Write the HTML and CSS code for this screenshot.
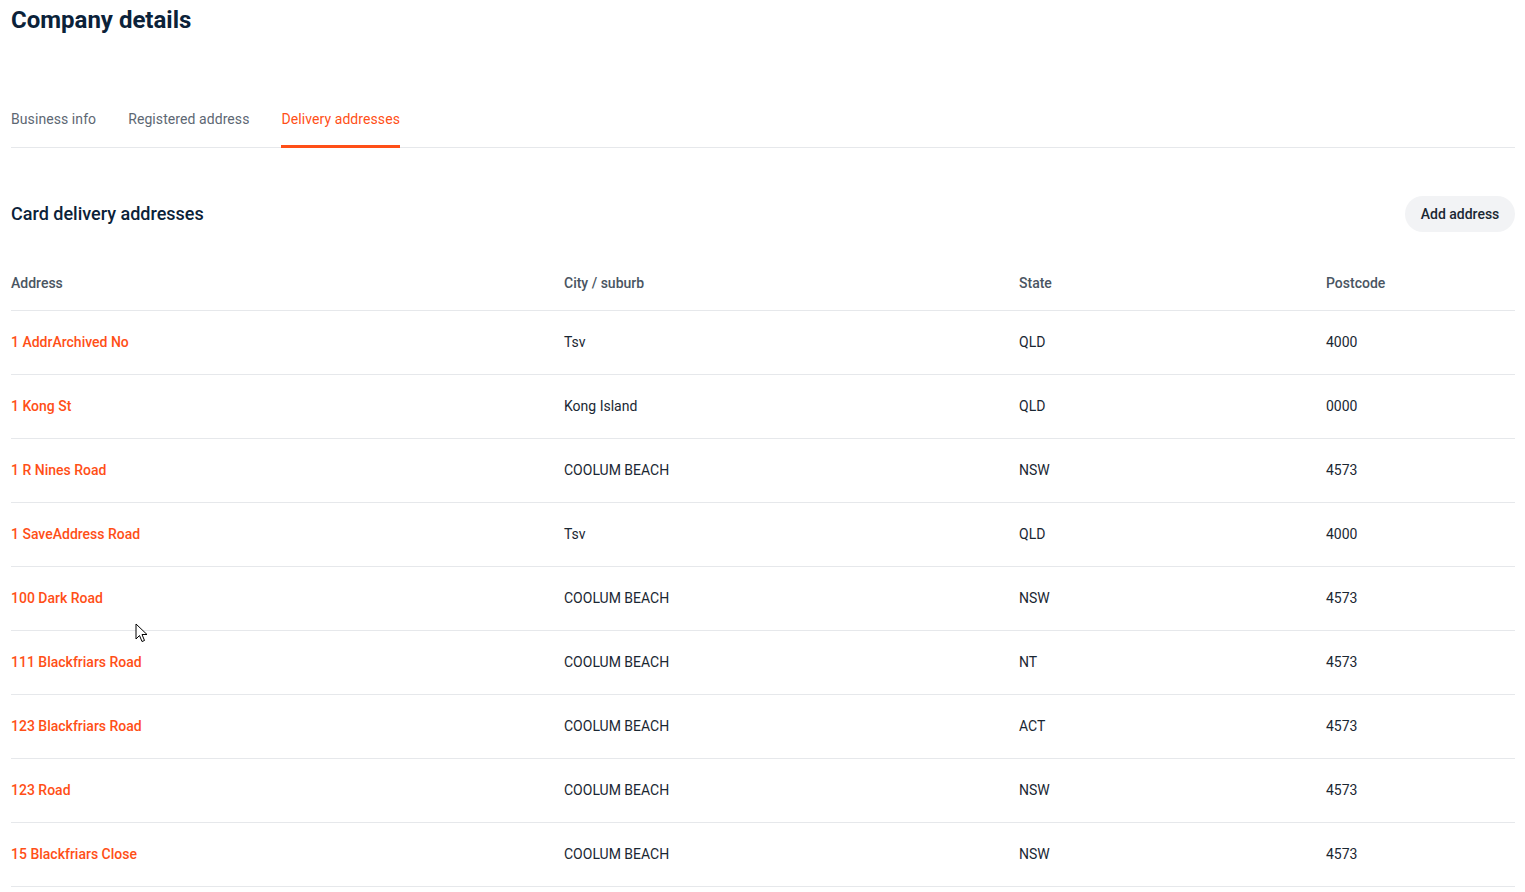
FILE: index.html
```html
<!DOCTYPE html>
<html lang="en">
<head>
<meta charset="utf-8">
<title>Company details</title>
<link rel="stylesheet" href="styles.css">
</head>
<body>
<main class="page">
  <h1 class="title">Company details</h1>
  <nav class="tabs">
    <a class="tab">Business info</a>
    <a class="tab">Registered address</a>
    <a class="tab active">Delivery addresses</a>
  </nav>
  <div class="section-head">
    <h2 class="section-title">Card delivery addresses</h2>
    <button class="btn">Add address</button>
  </div>
  <table class="table">
    <colgroup>
      <col class="c-addr"><col class="c-city"><col class="c-state"><col class="c-post">
    </colgroup>
    <thead>
      <tr><th>Address</th><th>City / suburb</th><th>State</th><th>Postcode</th></tr>
    </thead>
    <tbody>
      <tr><td><a class="link">1 AddrArchived No</a></td><td>Tsv</td><td>QLD</td><td>4000</td></tr>
      <tr><td><a class="link">1 Kong St</a></td><td>Kong Island</td><td>QLD</td><td>0000</td></tr>
      <tr><td><a class="link">1 R Nines Road</a></td><td>COOLUM BEACH</td><td>NSW</td><td>4573</td></tr>
      <tr><td><a class="link">1 SaveAddress Road</a></td><td>Tsv</td><td>QLD</td><td>4000</td></tr>
      <tr><td><a class="link">100 Dark Road</a></td><td>COOLUM BEACH</td><td>NSW</td><td>4573</td></tr>
      <tr><td><a class="link">111 Blackfriars Road</a></td><td>COOLUM BEACH</td><td>NT</td><td>4573</td></tr>
      <tr><td><a class="link">123 Blackfriars Road</a></td><td>COOLUM BEACH</td><td>ACT</td><td>4573</td></tr>
      <tr><td><a class="link">123 Road</a></td><td>COOLUM BEACH</td><td>NSW</td><td>4573</td></tr>
      <tr><td><a class="link">15 Blackfriars Close</a></td><td>COOLUM BEACH</td><td>NSW</td><td>4573</td></tr>
    </tbody>
  </table>
</main>
<svg class="cursor" width="14" height="21" viewBox="0 0 14 21">
  <path d="M1 1 L1 16 L4.5 12.5 L7 18.5 L9.5 17.5 L7 11.5 L12 11.5 Z" fill="#fff" stroke="#000" stroke-width="1" stroke-linejoin="miter"/>
</svg>
</body>
</html>
```

FILE: styles.css
```css
* { box-sizing: border-box; }
html, body { margin: 0; padding: 0; background: #fff; }
body {
  font-family: Roboto, "Noto Sans", "Liberation Sans", sans-serif;
  color: #1a2733;
  overflow: hidden;
}
.page {
  padding: 0 10px 0 11px;
  position: relative;
}
.title {
  margin: 0;
  font-size: 24px;
  line-height: 40px;
  font-weight: 700;
  color: #0b2239;
}
.tabs {
  display: flex;
  gap: 32px;
  margin-top: 69px;
  border-bottom: 1px solid #e6e8eb;
}
.tab {
  display: block;
  font-size: 14px;
  line-height: 20px;
  letter-spacing: 0.08px;
  color: #5d6773;
  padding-bottom: 16px;
  border-bottom: 3px solid transparent;
  margin-bottom: -1px;
}
.tab.active {
  color: #ff4f17;
  border-bottom-color: #ff4f17;
}
.section-head {
  display: flex;
  align-items: center;
  justify-content: space-between;
  margin-top: 48px;
  height: 36px;
}
.section-title {
  margin: 0 0 1px;
  font-size: 18px;
  font-weight: 500;
  color: #0b2239;
}
.btn {
  font-family: inherit;
  font-size: 14px;
  font-weight: 500;
  color: #1a2733;
  background: #f2f3f5;
  border: none;
  border-radius: 18px;
  height: 36px;
  width: 110px;
  padding: 0;
  flex: none;
}
.table {
  width: 100%;
  border-collapse: collapse;
  table-layout: fixed;
  margin-top: 24px;
  font-size: 14px;
}
.c-addr { width: 553px; }
.c-city { width: 455px; }
.c-state { width: 307px; }
.c-post { width: auto; }
.table th {
  text-align: left;
  font-weight: 500;
  color: #4a5562;
  height: 54px;
  padding: 0;
  border-bottom: 1px solid #e6e8eb;
}
.table td {
  height: 64px;
  padding: 0;
  border-bottom: 1px solid #e6e8eb;
  color: #1a2733;
}
.link {
  color: #ff4f17;
  font-weight: 500;
}
.cursor {
  position: absolute;
  left: 135px;
  top: 623px;
}
```
